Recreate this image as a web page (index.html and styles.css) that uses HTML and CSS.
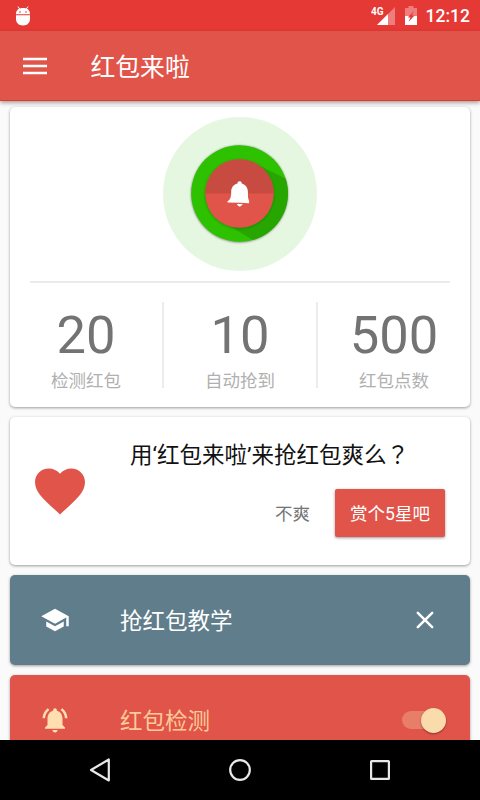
FILE: index.html
```html
<!DOCTYPE html>
<html lang="zh-CN">
<head>
<meta charset="utf-8">
<title>红包来啦</title>
<link rel="stylesheet" href="styles.css">
</head>
<body>
<div class="screen">
  <div class="statusbar">
    <svg class="debug" width="16" height="22" viewBox="0 0 16 22">
      <path d="M3 1.500l1.700 2.500M13 1.500l-1.700 2.500" stroke="#fff" stroke-width="1"/>
      <path fill="#fff" d="M1 9.300C1 5 3.500 3 8 3s7 2 7 6.300zM1 10.300h14v3.500c0 4-2.500 6.700-7 6.700s-7-2.700-7-6.700z"/>
      <circle cx="5" cy="7" r=".8" fill="#e53935"/><circle cx="11" cy="7" r=".8" fill="#e53935"/>
    </svg>
    <div class="status-right">
      <span class="net">4G</span>
      <svg class="signal" width="18" height="18" viewBox="0 0 18 18">
        <path fill="#fff" opacity=".35" d="M18 0v18H0z"/><path fill="#fff" d="M11 7v11H0z"/>
      </svg>
      <svg class="battery" width="12" height="19" viewBox="0 0 12 19">
        <path fill="#fff" opacity=".35" d="M3.500 0h5v2H12v8H0V2h3.500z"/>
        <path fill="#fff" d="M0 10h12v9H0z"/>
        <path fill="#e53935" d="M8.800 5L2.800 11.500h2.700L3.500 16l6-6.500H6.800z"/>
      </svg>
      <span class="clock">12:12</span>
    </div>
  </div>
  <header class="appbar">
    <svg class="menu" width="24" height="18" viewBox="0 0 24 18"><path fill="#fff" d="M0 .8h24v2.500H0zM0 7.800h24v2.500H0zM0 14.800h24v2.500H0z"/></svg>
    <h1 class="title">红包来啦</h1>
  </header>
  <main class="content">
    <section class="card summary">
      <svg class="dial" width="156" height="156" viewBox="0 0 156 156">
        <defs>
          <clipPath id="disc"><circle cx="77.500" cy="77.500" r="48.500"/></clipPath>
          <filter id="soft" x="-20%" y="-20%" width="140%" height="140%"><feGaussianBlur stdDeviation=".8"/></filter>
        </defs>
        <circle cx="78" cy="78" r="77" fill="#e5f7e1"/>
        <circle cx="77.500" cy="78" r="48.500" fill="#000" opacity=".45" filter="url(#soft)"/>
        <circle cx="77.500" cy="77.500" r="48.300" fill="#2dc100"/>
        <path clip-path="url(#disc)" fill="#27a500" d="M98 50l45 22v65H113L69 111z"/>
        <circle cx="77.500" cy="78.200" r="34.500" fill="#17780a" opacity=".6" filter="url(#soft)"/>
        <circle cx="77.500" cy="77.500" r="34.300" fill="#e15449"/>
        <path fill="#c84b41" d="M43.200 77.500a34.300 34.300 0 0 1 68.600 0z"/>
        <path fill="#fff" d="M77.700 65.300c1.300 0 2 .8 2 2.200 3.900 1.300 6.200 4.200 6.200 8.200 0 4.800.1 7.300 1.200 8.900v2.700l-9-.6-12.600-.3v-1.200c2.500-1.500 3.700-3.500 3.700-9.500 0-4 2-7 6.300-8.200 0-1.400.8-2.200 2.200-2.200zM75 88h5.600c-.2 1-.8 1.300-1.300 1.500-.4.800-.9 1.100-1.600 1.100s-1.300-.3-1.600-1.100c-.5-.2-1-.5-1.100-1.500z"/>
      </svg>
      <div class="stats">
        <div class="stat"><span class="number">20</span><span class="label">检测红包</span></div>
        <div class="stat"><span class="number">10</span><span class="label">自动抢到</span></div>
        <div class="stat"><span class="number">500</span><span class="label">红包点数</span></div>
      </div>
    </section>
    <section class="card rate">
      <svg width="60" height="60" viewBox="0 0 24 24"><path fill="#e15449" d="M12 21.350l-1.450-1.320C5.400 15.360 2 12.280 2 8.500 2 5.420 4.420 3 7.500 3c1.740 0 3.410.81 4.500 2.090C13.090 3.810 14.760 3 16.500 3 19.580 3 22 5.420 22 8.500c0 3.780-3.400 6.860-8.550 11.540z"/></svg>
      <div class="rate-body">
        <p class="question">用‘红包来啦’来抢红包爽么<span class="mark" lang="zh-TW">？</span></p>
        <div class="actions"><button class="flat">不爽</button><button class="raised">赏个5星吧</button></div>
      </div>
    </section>
    <section class="card row guide">
      <svg width="30" height="30" viewBox="0 0 24 24"><path fill="#fff" d="M5 13.180v4L12 21l7-3.820v-4L12 17l-7-3.820zM12 3L1 9l11 6 9-4.910V17h2V9L12 3z"/></svg>
      <span class="row-text">抢红包教学</span>
      <svg class="close" width="20" height="20" viewBox="0 0 20 20"><path stroke="#fff" stroke-width="2.500" stroke-linecap="round" d="M2.800 2.800l14.400 14.400M17.200 2.800L2.800 17.200"/></svg>
    </section>
    <section class="card row detect">
      <svg width="30" height="30" viewBox="0 0 24 24"><path fill="#ffdfaf" d="M7.580 4.080L6.150 2.650C3.750 4.480 2.170 7.300 2.030 10.500h2c.15-2.650 1.510-4.970 3.550-6.420zm12.390 6.420h2c-.15-3.200-1.730-6.020-4.120-7.850l-1.420 1.430c2.020 1.450 3.390 3.770 3.540 6.420zM18 11c0-3.070-1.640-5.640-4.500-6.320V4c0-.83-.67-1.500-1.500-1.500s-1.500.67-1.500 1.500v.68C7.630 5.360 6 7.920 6 11v5l-2 2v1h16v-1l-2-2v-5zM12 22c.14 0 .27-.01.4-.04.65-.14 1.180-.58 1.440-1.180.1-.24.15-.5.15-.78h-4c.01 1.100.9 2 2.010 2z"/></svg>
      <span class="row-text">红包检测</span>
      <span class="switch"><span class="thumb"></span></span>
    </section>
  </main>
  <nav class="navbar">
    <svg width="24" height="28" viewBox="0 0 24 28"><path fill="none" stroke="#e8e8e8" stroke-width="2.200" stroke-linejoin="round" d="M20.800 3.500v21L3 14z"/></svg>
    <svg width="24" height="24" viewBox="0 0 24 24"><circle cx="12" cy="12" r="9.800" fill="none" stroke="#e8e8e8" stroke-width="2.200"/></svg>
    <svg width="24" height="24" viewBox="0 0 24 24"><rect x="3.100" y="3.100" width="17.800" height="17.800" rx=".5" fill="none" stroke="#e8e8e8" stroke-width="2.200"/></svg>
  </nav>
</div>
</body>
</html>
```
FILE: styles.css
```css
* { box-sizing: border-box; }
body { margin: 0; font-family: Roboto, "Noto Sans CJK SC", sans-serif; }
svg { display: block; flex: none; }
.screen { width: 480px; height: 800px; display: flex; flex-direction: column; overflow: hidden; background: #fafafa; }

.statusbar { flex: none; height: 31px; padding: 0 10px 0 15px; display: flex; align-items: center; justify-content: space-between; background: #e53935; color: #fff; }
.status-right { display: flex; align-items: center; height: 31px; }
.net { font-size: 10px; font-weight: 700; line-height: 10px; margin: 0 -7px 8px 0; }
.signal { margin-right: 10px; }
.battery { margin-right: 9px; }
.clock { font-size: 17.5px; font-weight: 500; line-height: 31px; padding-top: 2px; }

.appbar { flex: none; height: 70px; padding-left: 23px; display: flex; align-items: center; background: #e15449; border-bottom: 1px solid #e5392c; box-shadow: 0 2px 4px rgba(0, 0, 0, .35); position: relative; }
.title { margin: 0; padding: 4px 0 0 43.5px; font-size: 24.800px; line-height: 36px; font-weight: 400; color: #fff; }

.content { flex: 1; min-height: 0; overflow: hidden; padding: 6px 10px 0; display: flex; flex-direction: column; gap: 10px; }
.card { flex: none; border-radius: 5px; background: #fff; box-shadow: 0 1px 3px rgba(0, 0, 0, .38); }
.summary { height: 300px; padding: 8.5px 20px 0; display: flex; flex-direction: column; align-items: center; }
.stats { width: 420px; margin-top: 9.5px; padding-top: 19px; border-top: 2px solid #ebebeb; display: flex; }
.stat { flex: none; width: 132px; height: 86px; display: flex; flex-direction: column; align-items: center; }
.stat:first-child { padding-right: 20px; }
.stat:last-child { padding-left: 20px; }
.stat:nth-child(2) { width: 156px; border-left: 2px solid #ececec; border-right: 2px solid #ececec; }
.number { font-size: 52.500px; line-height: 66px; color: #737373; }
.label { padding-top: 1px; font-size: 17.500px; line-height: 24px; color: #b0b0b0; font-weight: 400; white-space: nowrap; }

.rate { height: 148px; padding: 0 25px 0 20px; display: flex; align-items: center; }
.rate-body { flex: 1; height: 148px; padding: 21px 0 0 40px; }
.question { margin: 0; font-size: 22.500px; line-height: 34px; color: #111; white-space: nowrap; }
.mark { font-family: "Noto Sans CJK TC", sans-serif; line-height: 1; }
.actions { margin-top: 17px; display: flex; justify-content: flex-end; gap: 25px; }
button { border: 0; padding: 2px 0 0; height: 48px; background: none; font: 400 17.500px/46px Roboto, "Noto Sans CJK SC", sans-serif; }
.flat { color: #737373; }
.raised { width: 110px; border-radius: 2px; background: #e15449; color: #fff; box-shadow: 0 1px 3px rgba(0, 0, 0, .4); }

.row { height: 90px; padding: 0 24px 0 30px; display: flex; align-items: center; }
.row-text { flex: 1; padding: 2px 0 0 50px; font-size: 22.500px; line-height: 34px; }
.guide { background: #607d8b; color: #fff; }
.close { margin-right: 11px; }
.detect { background: #e15449; color: #fcca97; }
.switch { width: 44px; height: 18px; border-radius: 9px; background: linear-gradient(90deg, #e87e69 40px, transparent 40px); display: flex; align-items: center; justify-content: flex-end; }
.thumb { width: 25px; height: 25px; border-radius: 50%; background: #fadcac; box-shadow: 0 1px 2px rgba(0, 0, 0, .4); }

.navbar { flex: none; height: 60px; padding: 0 88px; background: #000; display: flex; align-items: center; justify-content: space-between; }
```
